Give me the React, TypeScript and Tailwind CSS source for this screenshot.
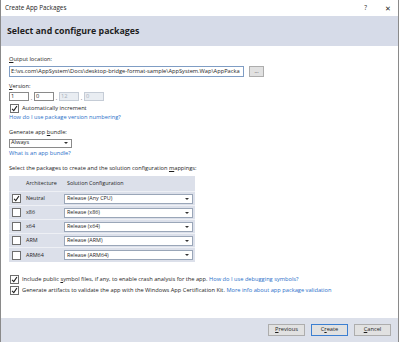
const rows = [
  { arch: "Neutral", config: "Release (Any CPU)", checked: true },
  { arch: "x86", config: "Release (x86)", checked: false },
  { arch: "x64", config: "Release (x64)", checked: false },
  { arch: "ARM", config: "Release (ARM)", checked: false },
  { arch: "ARM64", config: "Release (ARM64)", checked: false },
];

function Check({ checked }: { checked: boolean }) {
  return (
    <span className="flex h-[9px] w-[9px] shrink-0 items-center justify-center border border-[#6f6f6f] bg-white">
      {checked ? (
        <svg viewBox="0 0 10 10" className="h-[7px] w-[7px]" fill="none" stroke="#1e1e1e" strokeWidth="1.6" aria-hidden="true">
          <path d="M1.5 5.5 4 8 8.5 1.5" />
        </svg>
      ) : null}
    </span>
  );
}

function Arrow() {
  return <span className="ml-auto mr-[3px] h-0 w-0 border-x-[2px] border-t-[2px] border-x-transparent border-t-[#333]" />;
}

export default function App() {
  return (
    <div className="flex h-[342px] w-[399px] flex-col overflow-hidden border-x border-[#8a8a8a] bg-white font-['Segoe_UI','Open_Sans',sans-serif] text-[5.7px] leading-none text-[#1e1e1e]">
      {/* title bar */}
      <div className="flex h-[16px] shrink-0 items-center pl-[4px] pr-[7px] text-[6.3px]">
        <span>Create App Packages</span>
        <span className="ml-auto">?</span>
        <span className="ml-[18px] text-[7px]">✕</span>
      </div>

      <div className="flex h-[30px] shrink-0 items-center bg-[#d6dbe8] pl-[6px] text-[8.8px] font-bold">
        Select and configure packages
      </div>

      <div className="flex flex-1 flex-col px-[8px] pt-[11px]">
        <div>
          <span className="underline">O</span>utput location:
        </div>
        <div className="mt-[3px] flex items-center gap-[5px]">
          <div className="h-[11px] w-[235px] overflow-hidden border border-[#7f9dc4] pl-[1px] pt-[2px]">
            <span className="block whitespace-nowrap">E:\vs.com\AppSystem\Docs\desktop-bridge-format-sample\AppSystem.Wap\AppPacka</span>
          </div>
          <div className="flex h-[11px] w-[15px] items-center justify-center border border-[#adadad] bg-[#e1e1e1] text-[5px]">
            ...
          </div>
        </div>

        <div className="mt-[7px]">
          <span className="underline">V</span>ersion:
        </div>
        <div className="mt-[3px] flex items-end">
          <div className="flex h-[9px] w-[20px] items-center border border-[#8a8a8a] pl-[1px]">1</div>
          <span className="w-[5px] text-center">.</span>
          <div className="flex h-[9px] w-[20px] items-center border border-[#8a8a8a] pl-[1px]">0</div>
          <span className="w-[5px] text-center">.</span>
          <div className="flex h-[9px] w-[20px] items-center border border-[#c5ccd6] bg-[#e9edf2] pl-[1px] text-[#a8b0ba]">12</div>
          <span className="w-[5px] text-center">.</span>
          <div className="flex h-[9px] w-[20px] items-center border border-[#c5ccd6] bg-[#e9edf2] pl-[1px] text-[#a8b0ba]">0</div>
        </div>
        <div className="mt-[3px] flex items-center gap-[3px] pl-[1px]">
          <Check checked />
          <span>Automatically increment</span>
        </div>
        <div className="mt-[2px] text-[#2a6fc9]">How do I use package version numbering?</div>

        <div className="mt-[9px]">
          Generate app <span className="underline">b</span>undle:
        </div>
        <div className="mt-[3px] flex h-[9px] w-[63px] items-center border border-[#8a8a8a] pl-[1px]">
          Always
          <Arrow />
        </div>
        <div className="mt-[3px] text-[#2a6fc9]">What is an app bundle?</div>

        <div className="mt-[9px]">
          Select the packages to create and the solution configuration <span className="underline">m</span>appings:
        </div>
        <div className="mt-[5px] w-[186px] bg-[#dce0ea]">
          <div className="grid h-[16px] grid-cols-[15px_40px_1fr] items-center border-b border-[#eef0f5] text-[5.4px]">
            <span />
            <span className="pl-[2px]">Architecture</span>
            <span className="pl-[3px]">Solution Configuration</span>
          </div>
          {rows.map((r) => (
            <div key={r.arch} className="grid h-[14px] grid-cols-[15px_40px_1fr] items-center border-b border-[#eef0f5] last:border-b-0">
              <span className="flex justify-center">
                <Check checked={r.checked} />
              </span>
              <span className="pl-[2px] text-[5.4px]">{r.arch}</span>
              <span className="pr-[2px]">
                <span className="flex h-[10px] items-center border border-[#9aa6b8] bg-white pl-[2px] text-[5.4px]">
                  {r.config}
                  <Arrow />
                </span>
              </span>
            </div>
          ))}
        </div>

        <div className="mt-[13px] flex items-center gap-[3px] whitespace-nowrap pl-[1px]">
          <Check checked />
          <span>
            Include public <span className="underline">s</span>ymbol files, if any, to enable crash analysis for the app.{" "}
            <span className="text-[#2a6fc9]">How do I use debugging symbols?</span>
          </span>
        </div>
        <div className="mt-[2px] flex items-center gap-[3px] whitespace-nowrap pl-[1px]">
          <Check checked />
          <span>
            Generate artifacts to validate the app with the Windows App Certification Kit.{" "}
            <span className="text-[#2a6fc9]">More info about app package validation</span>
          </span>
        </div>
      </div>

      <div className="flex h-[24px] shrink-0 items-center justify-end gap-[6px] bg-[#dce0ea] pr-[7px]">
        <div className="flex h-[12px] w-[37px] items-center justify-center border border-[#adadad] bg-[#e1e1e1]">
          <span><span className="underline">P</span>revious</span>
        </div>
        <div className="flex h-[12px] w-[37px] items-center justify-center border border-[#3c7fd1] bg-[#e1e1e1]">
          <span>C<span className="underline">r</span>eate</span>
        </div>
        <div className="flex h-[12px] w-[37px] items-center justify-center border border-[#adadad] bg-[#e1e1e1]">
          <span><span className="underline">C</span>ancel</span>
        </div>
      </div>
    </div>
  );
}
